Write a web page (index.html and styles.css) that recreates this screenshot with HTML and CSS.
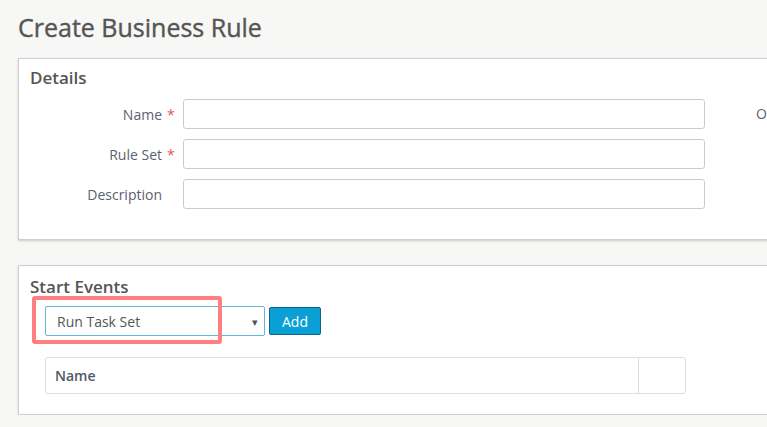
FILE: index.html
```html
<!DOCTYPE html>
<html>
<head>
<meta charset="utf-8">
<link rel="stylesheet" href="styles.css">
</head>
<body>
<div class="page">
  <h1 class="title">Create Business Rule</h1>

  <section class="panel details">
    <h2 class="panel-title">Details</h2>
    <div class="details-body">
      <div class="form">
        <label class="label">Name</label><span class="req">*</span><div class="input"></div>
        <label class="label">Rule Set</label><span class="req">*</span><div class="input"></div>
        <label class="label">Description</label><span class="req"></span><div class="input"></div>
      </div>
      <div class="side-col">O</div>
    </div>
  </section>

  <section class="panel events">
    <h2 class="panel-title">Start Events</h2>
    <div class="events-body">
      <div class="add-row">
        <div class="select-wrap">
          <div class="select"><span>Run Task Set</span><span class="arrow">▾</span></div>
          <div class="highlight"></div>
        </div>
        <button class="btn">Add</button>
      </div>
      <div class="table">
        <div class="th">Name</div>
        <div class="th th-empty"></div>
      </div>
    </div>
  </section>
</div>
</body>
</html>
```
FILE: styles.css
```css
html, body {
  margin: 0;
  padding: 0;
  background: #f7f7f5;
  overflow: hidden;
}
body {
  font-family: "Open Sans", "Liberation Sans", sans-serif;
  color: #555;
}
.page {
  width: 1000px;
  padding: 10px 0 0 18px;
}
.title {
  margin: 0;
  font-size: 25px;
  font-weight: 400;
  line-height: 34px;
  color: #555;
  padding-left: 0;
  -webkit-text-stroke: 0.4px #555;
}
.panel {
  background: #fff;
  border: 1px solid #cfcfcf;
  box-shadow: 0 1px 2px rgba(0,0,0,0.18);
}
.details {
  margin-top: 14px;
  height: 182px;
  box-sizing: border-box;
  padding: 6px 0 0 11px;
}
.events {
  margin-top: 25px;
  height: 150px;
  box-sizing: border-box;
  padding: 8px 0 0 11px;
}
.panel-title {
  margin: 0;
  font-size: 17px;
  font-weight: 600;
  line-height: 26px;
  color: #555;
}
.details-body {
  display: flex;
  margin-top: 8px;
}
.form {
  display: grid;
  grid-template-columns: 132px 21px 522px;
  row-gap: 10px;
  align-items: center;
}
.label {
  text-align: right;
  font-size: 14px;
  color: #5a6270;
}
.req {
  color: #e9534f;
  font-size: 14px;
  padding-left: 5px;
}
.input {
  height: 30px;
  box-sizing: border-box;
  border: 1px solid #ccc;
  border-radius: 3px;
  background: #fff;
}
.side-col {
  margin-left: 51px;
  font-size: 14px;
  color: #5a6270;
  line-height: 30px;
}
.events-body {
  padding-left: 15px;
}
.add-row {
  display: flex;
  gap: 4px;
  margin-top: 6px;
}
.select-wrap {
  position: relative;
}
.select {
  width: 220px;
  height: 30px;
  box-sizing: border-box;
  border: 1px solid #66b5df;
  border-radius: 2px;
  display: flex;
  align-items: center;
  justify-content: space-between;
  padding: 0 6px 0 11px;
  font-size: 14px;
  color: #555;
}
.arrow {
  font-size: 11px;
  color: #555;
}
.highlight {
  position: absolute;
  left: -13px;
  top: -10px;
  width: 190px;
  height: 48px;
  box-sizing: border-box;
  border: 4px solid #fd7f7f;
  border-radius: 3px;
}
.btn {
  height: 28px;
  margin-top: 1px;
  width: 52px;
  box-sizing: border-box;
  background: #0a9fd5;
  border: 1px solid #10628a;
  border-radius: 2px;
  color: #fff;
  font-family: "Open Sans", "Liberation Sans", sans-serif;
  font-size: 14px;
  padding: 0;
}
.table {
  margin-top: 21px;
  width: 641px;
  height: 37px;
  box-sizing: border-box;
  border: 1px solid #ddd;
  border-radius: 3px;
  display: grid;
  grid-template-columns: 1fr 47px;
}
.th {
  font-size: 14px;
  font-weight: 600;
  color: #4f5864;
  padding-left: 9px;
  line-height: 35px;
}
.th-empty {
  border-left: 1px solid #ddd;
}
```
